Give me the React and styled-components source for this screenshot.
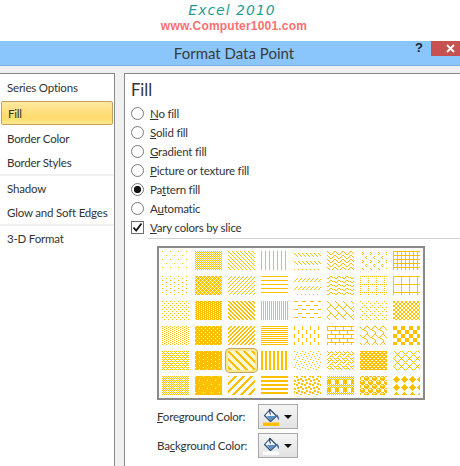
import React from "react";
import styled, { createGlobalStyle } from "styled-components";

const GlobalStyle = createGlobalStyle`
  html, body {
    margin: 0;
    padding: 0;
    background: #fff;
  }
  body {
    font-family: "Lato", "Open Sans", sans-serif;
    font-size: 11.5px;
    letter-spacing: -0.2px;
    color: #333;
  }
`;

const sideItems = [
  { label: "Series Options" },
  { label: "Fill", active: true },
  { label: "Border Color" },
  { label: "Border Styles", divider: true },
  { label: "Shadow" },
  { label: "Glow and Soft Edges", divider: true },
  { label: "3-D Format" },
];

const fillOptions = [
  { before: "", key: "N", after: "o fill" },
  { before: "", key: "S", after: "olid fill" },
  { before: "", key: "G", after: "radient fill" },
  { before: "", key: "P", after: "icture or texture fill" },
  { before: "Pa", key: "t", after: "tern fill", checked: true },
  { before: "A", key: "u", after: "tomatic" },
];

// 8x8 hatch tiles, one hex byte for each row, listed row by row
const hatches = [
  ["80 00 00 00 08 00 00 00", "AA 55", "88 44 22 11", "88", "00 00 88 44 22 11 00 00", "81 42 24 18", "00 20 10 20 00 02 04 02", "FF 88 88 88"],
  ["80 00 08 00", "EE 55 BB 55", "11 22 44 88", "FF 00 00 00", "00 00 11 22 44 88 00 00", "18 25 C0 00", "AA 00 80 00 80 00 80 00", "FF 80 80 80 80 80 80 80"],
  ["88 00 22 00", "77 DD", "CC 66 33 99", "AA", "F0 00 00 00 0F 00 00 00", "80 40 20 10 18 24 42 81", "80 00 22 00 08 00 22 00", "CC CC 33 33"],
  ["88 22", "77 FF DD FF", "33 66 CC 99", "FF 00", "80 80 80 80 08 08 08 08", "FF 80 80 80 FF 08 08 08", "03 84 48 30 0C 02 01 01", "F0 F0 F0 F0 0F 0F 0F 0F"],
  ["AA 44 AA 11", "7F FF F7 FF", "C1 E0 70 38 1C 0E 07 83", "CC", "80 10 02 20 01 08 40 04", "88 54 22 45 88 14 22 51", "FF 66 FF 99", "41 22 14 08 14 22 41 80"],
  ["AA 55 AA 51", "7F FF FF FF F7 FF FF FF", "83 07 0E 1C 38 70 E0 C1", "FF FF 00 00", "B1 30 03 1B D8 C0 0C 8D", "AA 55 AA 55 F0 F0 F0 F0", "77 89 8F 8F 77 98 F8 F8", "10 38 7C FE 7C 38 10 00"],
];

const hatchPath = (hex, width, height) => {
  const rows = hex.split(" ").map((value) => parseInt(value, 16));
  let d = "";
  for (let y = 0; y < height; y++) {
    const row = rows[y % rows.length];
    for (let x = 0; x < width; x++) {
      if (row & (0x80 >> x % 8)) d += `M${x} ${y}h1v1h-1z`;
    }
  }
  return d;
};

const Hatch = ({ hex }) => (
  <svg width="27" height="19" viewBox="0 0 27 19" shapeRendering="crispEdges" style={{ display: "block" }}>
    <path d={hatchPath(hex, 27, 19)} fill="#ffc000" />
  </svg>
);

const Bucket = ({ bar }) => (
  <BucketIcon width="20" height="20" viewBox="0 0 20 20">
    <path d="M8 2.5 L2.5 8.5 L8.5 14.5 L14.5 9 Z" fill="#eef4fb" stroke="#27476e" strokeWidth="1.1" strokeLinejoin="round" />
    <path d="M5 9 L14 9 L8.5 14 Z" fill="#5b8fc9" />
    <path d="M8 2 Q7 5.5 8.5 7.5" fill="none" stroke="#1d2f45" strokeWidth="1.1" />
    <path d="M15 7.5 Q17.5 9.5 17 13.5 Q15.2 11.5 14.5 9 Z" fill="#3f6fa8" />
    <rect x="1" y="15.5" width="16" height="3.5" fill={bar} />
  </BucketIcon>
);

const ColorButton = ({ label, bar }) => (
  <ColorRow>
    <ColorLabel>{label}</ColorLabel>
    <DropButton type="button">
      <Bucket bar={bar} />
      <Caret />
    </DropButton>
  </ColorRow>
);

export default function App() {
  return (
    <Page>
      <GlobalStyle />
      <Banner>
        <BannerTitle>Excel 2010</BannerTitle>
        <BannerSite>www.Computer1001.com</BannerSite>
      </Banner>
      <TitleBar>
        Format Data Point
        <HelpMark>?</HelpMark>
        <CloseButton>
          <svg width="9" height="9" viewBox="0 0 9 9">
            <path d="M1 1 L8 8 M8 1 L1 8" stroke="#fff" strokeWidth="1.8" />
          </svg>
        </CloseButton>
      </TitleBar>
      <Body>
        <Sidebar>
          {sideItems.map((item) => (
            <React.Fragment key={item.label}>
              <SideItem $active={item.active}>{item.label}</SideItem>
              {item.divider && <SideDivider />}
            </React.Fragment>
          ))}
        </Sidebar>
        <Panel>
          <Heading>Fill</Heading>
          {fillOptions.map((option) => (
            <OptionRow key={option.key}>
              <Radio $checked={option.checked} />
              <span>
                {option.before}
                <u>{option.key}</u>
                {option.after}
              </span>
            </OptionRow>
          ))}
          <OptionRow>
            <CheckBox>
              <svg width="11" height="11" viewBox="0 0 11 11">
                <path d="M1.5 5.5 L4.2 8.5 L9.5 1.5" fill="none" stroke="#111" strokeWidth="1.8" />
              </svg>
            </CheckBox>
            <span>
              <u>V</u>ary colors by slice
            </span>
          </OptionRow>
          <Rule />
          <HatchGrid>
            {hatches.map((row, r) =>
              row.map((hex, c) => (
                <HatchCell key={`${r}-${c}`} $selected={r === 4 && c === 2}>
                  <Hatch hex={hex} />
                </HatchCell>
              ))
            )}
          </HatchGrid>
          <ColorButton
            label={
              <>
                <u>F</u>oreground Color:
              </>
            }
            bar="#ffc000"
          />
          <ColorButton
            label={
              <>
                Ba<u>c</u>kground Color:
              </>
            }
            bar="#ffffff"
          />
        </Panel>
      </Body>
    </Page>
  );
}

const Page = styled.div`
  width: 460px;
  height: 466px;
  overflow: hidden;
  display: flex;
  flex-direction: column;
  background: #fff;
`;

const Banner = styled.div`
  height: 41px;
  flex: none;
  display: flex;
  flex-direction: column;
  align-items: center;
  padding-left: 8px;
  letter-spacing: 0;
`;

const BannerTitle = styled.div`
  margin-top: 2px;
  margin-right: 4px;
  height: 17px;
  line-height: 17px;
  font-family: "DejaVu Sans", sans-serif;
  font-style: italic;
  font-size: 14px;
  letter-spacing: 1px;
  color: #1f9d92;
`;

const BannerSite = styled.div`
  margin-top: 1px;
  line-height: 13px;
  font-family: "Liberation Sans", sans-serif;
  font-weight: bold;
  font-size: 12px;
  letter-spacing: 0.2px;
  color: #f97070;
`;

const TitleBar = styled.div`
  position: relative;
  height: 24px;
  flex: none;
  display: flex;
  align-items: center;
  justify-content: center;
  padding-left: 8px;
  background: #8ac6fb;
  border-bottom: 1px solid #79aede;
  font-size: 15px;
  letter-spacing: 0;
  color: #3a3a3a;
`;

const HelpMark = styled.span`
  position: absolute;
  top: -1px;
  right: 37px;
  font-family: "Liberation Sans", sans-serif;
  font-weight: bold;
  font-size: 13px;
  color: #222;
`;

const CloseButton = styled.span`
  position: absolute;
  top: 0;
  right: 0;
  width: 29px;
  height: 15px;
  display: flex;
  align-items: center;
  justify-content: center;
  padding-left: 10px;
  box-sizing: border-box;
  background: #c75050;
`;

const Body = styled.div`
  flex: 1;
  display: flex;
  gap: 9px;
  padding-top: 7px;
  background: #f0f0f0;
`;

const Sidebar = styled.div`
  width: 114px;
  flex: none;
  display: flex;
  flex-direction: column;
  padding-top: 1px;
  background: #fff;
  border-top: 1px solid #8a8a8a;
  border-right: 1px solid #8a8a8a;
`;

const SideItem = styled.div`
  height: 24px;
  flex: none;
  display: flex;
  align-items: center;
  box-sizing: border-box;
  padding-left: 7px;
  white-space: nowrap;
  ${(p) =>
    p.$active &&
    `
    margin: 2px 1px 1px;
    padding-left: 6px;
    border: 1px solid #c2a25c;
    border-radius: 2px;
    background: linear-gradient(#fde8a0, #ffdb6c 70%, #ffe98f);
  `}
`;

const SideDivider = styled.div`
  height: 2px;
  flex: none;
  background: #f0f0f0;
`;

const Panel = styled.div`
  flex: 1;
  display: flex;
  flex-direction: column;
  background: #fff;
  border-top: 1px solid #8a8a8a;
  border-left: 1px solid #8a8a8a;
  padding-left: 6px;
`;

const Heading = styled.div`
  height: 30px;
  padding-top: 2px;
  box-sizing: border-box;
  line-height: 28px;
  font-size: 16.5px;
  letter-spacing: 0;
  color: #333;
`;

const OptionRow = styled.div`
  height: 19px;
  flex: none;
  display: flex;
  align-items: center;
  gap: 6px;
`;

const Radio = styled.span`
  width: 13px;
  height: 13px;
  flex: none;
  box-sizing: border-box;
  border: 1px solid #7a7a7a;
  border-radius: 50%;
  background: ${(p) =>
    p.$checked ? "radial-gradient(circle, #111 0 3.4px, #fff 3.9px)" : "#fff"};
`;

const CheckBox = styled.span`
  width: 13px;
  height: 13px;
  flex: none;
  display: flex;
  align-items: center;
  justify-content: center;
  box-sizing: border-box;
  border: 1px solid #6e6e6e;
  background: #fff;
`;

const Rule = styled.div`
  height: 1px;
  flex: none;
  margin: 1px 0 7px 17px;
  background: #d2d2d2;
`;

const HatchGrid = styled.div`
  width: 258px;
  flex: none;
  margin: 0 0 4px 26px;
  padding: 3px;
  display: grid;
  grid-template-columns: repeat(8, 27px);
  grid-auto-rows: 19px;
  gap: 6px;
  border: 2px solid #8a8a8a;
`;

const HatchCell = styled.div`
  ${(p) =>
    p.$selected &&
    `
    border-radius: 2px;
    background: #fff9d8;
    box-shadow: 0 0 0 2px #ffe98f, 0 0 0 3px #c2a25c;
  `}
`;

const ColorRow = styled.div`
  height: 25px;
  flex: none;
  display: flex;
  align-items: center;
  margin: 0 0 4px 26px;
`;

const ColorLabel = styled.span`
  width: 101px;
  flex: none;
`;

const DropButton = styled.button`
  width: 40px;
  height: 25px;
  padding: 0 0 0 3px;
  display: flex;
  align-items: center;
  box-sizing: border-box;
  border: 1px solid #a8a8a8;
  background: linear-gradient(#f5f5f5, #e2e2e2);
`;

const BucketIcon = styled.svg`
  flex: none;
  display: block;
`;

const Caret = styled.span`
  width: 0;
  height: 0;
  margin-left: 2px;
  border-left: 4px solid transparent;
  border-right: 4px solid transparent;
  border-top: 4px solid #111;
`;
